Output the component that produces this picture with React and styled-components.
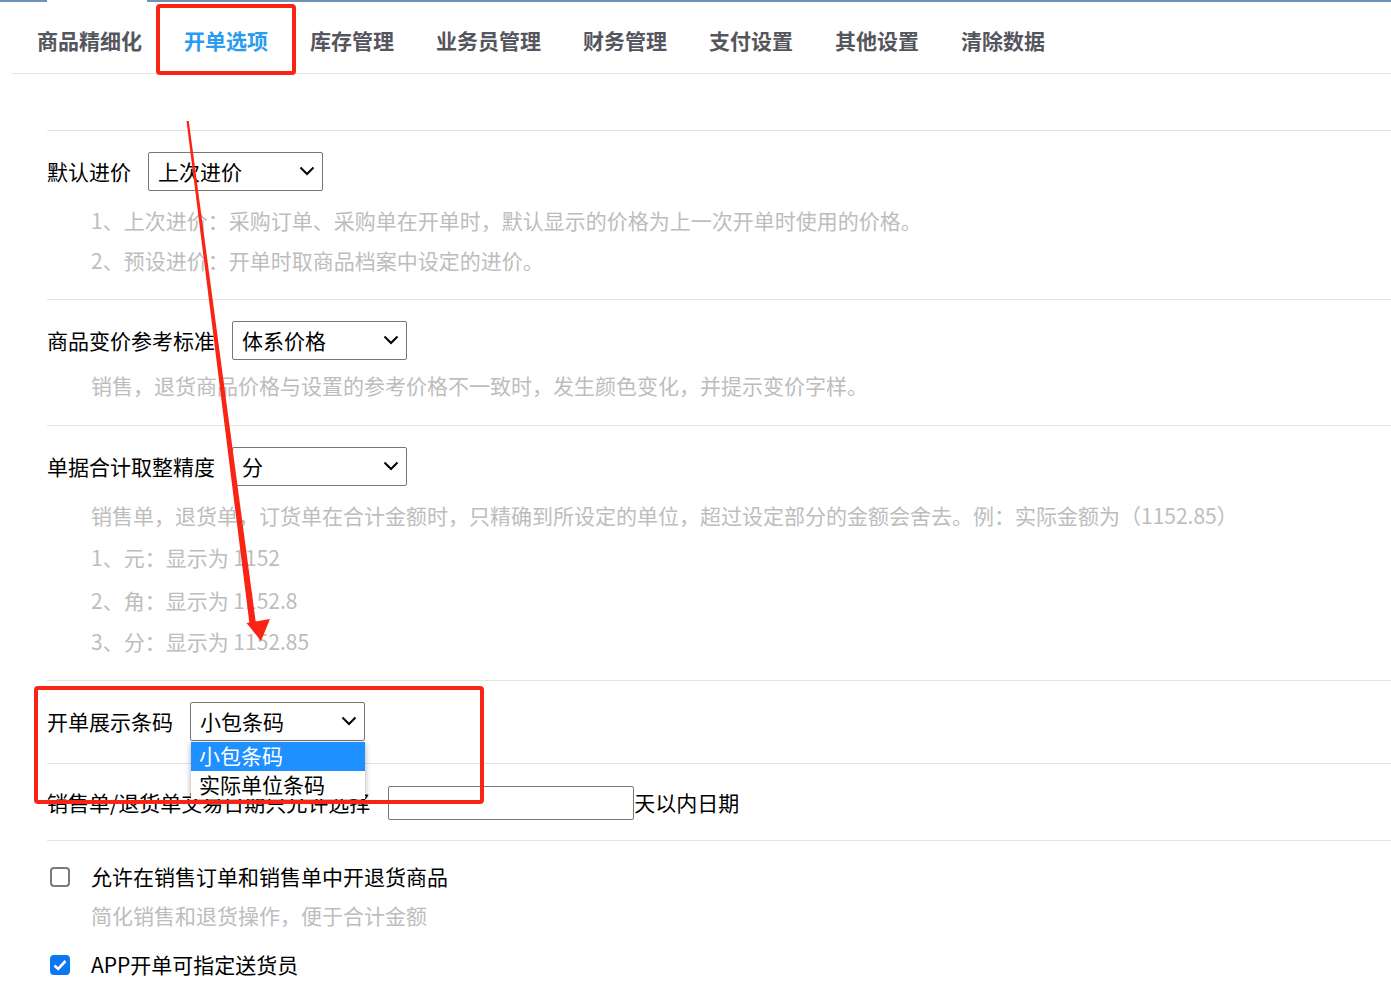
import React from "react";
import styled, { createGlobalStyle } from "styled-components";

const Global = createGlobalStyle`
  html, body { margin: 0; padding: 0; background: #fff; }
  body { font-family: "Noto Sans CJK SC", "Microsoft YaHei", sans-serif; }
  * { box-sizing: border-box; }
`;

const Page = styled.div`
  position: relative;
  width: 1391px;
  height: 992px;
  overflow: hidden;
  background: #fff;
`;

const TopRule = styled.div`
  display: flex;
  gap: 100px;
  height: 2px;
`;

const RuleSeg = styled.div`
  height: 2px;
  background: #6d93b6;
  width: ${(p) => (p.$w ? `${p.$w}px` : "auto")};
  flex: ${(p) => (p.$w ? "none" : "1")};
`;

const TabBar = styled.div`
  display: flex;
  align-items: center;
  margin-left: 12px;
  padding-left: 4px;
  height: 72px;
  border-bottom: 1px solid #e3e3e3;
`;

const Tab = styled.div`
  padding: 0 21px;
  font-size: 21px;
  font-weight: 700;
  line-height: 60px;
  margin-top: 5px;
  color: ${(p) => (p.$active ? "#2a9bf0" : "#55555e")};
  white-space: nowrap;
`;

const Content = styled.div`
  padding-left: 47px;
  margin-top: 56px;
`;

const Section = styled.div`
  border-top: 1px solid #e3e3e3;
  padding-top: ${(p) => p.$pt ?? 21}px;
  padding-bottom: ${(p) => p.$pb ?? 18}px;
`;

const Row = styled.div`
  display: flex;
  align-items: center;
  height: ${(p) => p.$h ?? 39}px;
  font-size: 21px;
  color: #000;
`;

const Label = styled.span`
  margin-right: ${(p) => p.$mr ?? 17}px;
  margin-top: -2px;
  white-space: nowrap;
`;

const SelectWrap = styled.div`
  position: relative;
`;

const SelectBox = styled.div`
  width: 175px;
  height: 39px;
  border: 1px solid #767676;
  border-radius: 2px;
  display: flex;
  align-items: center;
  justify-content: space-between;
  padding: 0 7px 2px 9px;
  font-size: 21px;
  color: #000;
  background: #fff;
`;

const DropList = styled.div`
  position: absolute;
  top: 40px;
  left: 1px;
  width: 174px;
  background: #fff;
  box-shadow: 0 2px 6px rgba(0, 0, 0, 0.35);
  z-index: 5;
`;

const Option = styled.div`
  height: 28.5px;
  line-height: 27px;
  padding-left: 8px;
  font-size: 21px;
  color: ${(p) => (p.$sel ? "#fff" : "#000")};
  background: ${(p) => (p.$sel ? "#1e90ff" : "#fff")};
`;

const Desc = styled.div`
  padding-left: 44px;
  font-size: 21px;
  color: #bdbdbd;
  height: ${(p) => p.$h ?? 40}px;
  line-height: ${(p) => (p.$h ?? 40) - 3}px;
  margin-top: ${(p) => p.$mt ?? 0}px;
  white-space: nowrap;
`;

const TextInput = styled.div`
  width: 246px;
  height: 34px;
  border: 1px solid #767676;
  border-radius: 2px;
  margin-left: 18px;
`;

const CheckRow = styled.div`
  display: flex;
  align-items: center;
  height: 40px;
  font-size: 21px;
  color: #000;
  margin-top: ${(p) => p.$mt ?? 0}px;
`;

const CheckText = styled.span`
  margin-top: -2px;
`;

const Check = styled.span`
  width: 20px;
  height: 20px;
  margin-left: 3px;
  margin-right: 21px;
  border-radius: 4px;
  display: inline-flex;
  align-items: center;
  justify-content: center;
  border: ${(p) => (p.$on ? "none" : "2px solid #7a7a7a")};
  background: ${(p) => (p.$on ? "#0b77f2" : "#fff")};
`;

const Overlay = styled.div`
  position: absolute;
  inset: 0;
  pointer-events: none;
  z-index: 10;
`;

const RedBox = styled.div`
  position: absolute;
  border: 4px solid #fa2414;
  border-radius: 4px;
  left: ${(p) => p.$x}px;
  top: ${(p) => p.$y}px;
  width: ${(p) => p.$w}px;
  height: ${(p) => p.$h}px;
`;

const ArrowSvg = styled.svg`
  position: absolute;
  left: 0;
  top: 0;
`;

const Chevron = () => (
  <svg width="16" height="10" viewBox="0 0 16 10">
    <path d="M1.5 1.5 L8 8 L14.5 1.5" fill="none" stroke="#000" strokeWidth="2" />
  </svg>
);

const Select = ({ value, open }) => (
  <SelectWrap>
    <SelectBox>
      <span>{value}</span>
      <Chevron />
    </SelectBox>
    {open && (
      <DropList>
        <Option $sel>小包条码</Option>
        <Option>实际单位条码</Option>
      </DropList>
    )}
  </SelectWrap>
);

const tabs = ["商品精细化", "开单选项", "库存管理", "业务员管理", "财务管理", "支付设置", "其他设置", "清除数据"];

export default function App() {
  return (
    <Page>
      <Global />
      <TopRule>
        <RuleSeg $w={47} />
        <RuleSeg />
      </TopRule>
      <TabBar>
        {tabs.map((t) => (
          <Tab key={t} $active={t === "开单选项"}>{t}</Tab>
        ))}
      </TabBar>
      <Content>
        <Section $pb={17}>
          <Row>
            <Label>默认进价</Label>
            <Select value="上次进价" />
          </Row>
          <Desc $mt={11}>1、上次进价：采购订单、采购单在开单时，默认显示的价格为上一次开单时使用的价格。</Desc>
          <Desc>2、预设进价：开单时取商品档案中设定的进价。</Desc>
        </Section>
        <Section $pb={18}>
          <Row>
            <Label>商品变价参考标准</Label>
            <Select value="体系价格" />
          </Row>
          <Desc $mt={7}>销售，退货商品价格与设置的参考价格不一致时，发生颜色变化，并提示变价字样。</Desc>
        </Section>
        <Section $pb={18}>
          <Row>
            <Label>单据合计取整精度</Label>
            <Select value="分" />
          </Row>
          <Desc $mt={11}>销售单，退货单，订货单在合计金额时，只精确到所设定的单位，超过设定部分的金额会舍去。例：实际金额为（1152.85）</Desc>
          <Desc $h={43}>1、元：显示为 1152</Desc>
          <Desc $h={43}>2、角：显示为 1152.8</Desc>
          <Desc $h={39}>3、分：显示为 1152.85</Desc>
        </Section>
        <Section $pb={22}>
          <Row>
            <Label $mr={17}>开单展示条码</Label>
            <Select value="小包条码" open />
          </Row>
        </Section>
        <Section $pb={20}>
          <Row $h={35}>
            <Label $mr={0}>销售单/退货单交易日期只允许选择</Label>
            <TextInput />
            <CheckText>天以内日期</CheckText>
          </Row>
        </Section>
        <Section $pt={16} $pb={0}>
          <CheckRow>
            <Check />
            <CheckText>允许在销售订单和销售单中开退货商品</CheckText>
          </CheckRow>
          <Desc>简化销售和退货操作，便于合计金额</Desc>
          <CheckRow $mt={8}>
            <Check $on>
              <svg width="14" height="12" viewBox="0 0 14 12">
                <path d="M1.5 6.5 L5.2 10 L12.5 2" fill="none" stroke="#fff" strokeWidth="2.6" />
              </svg>
            </Check>
            <CheckText>APP开单可指定送货员</CheckText>
          </CheckRow>
        </Section>
      </Content>
      <Overlay>
        <RedBox $x={156} $y={4} $w={140} $h={71} />
        <RedBox $x={34} $y={686} $w={450} $h={118} />
        <ArrowSvg width="1391" height="992" viewBox="0 0 1391 992">
          <polygon points="186.5,121 188.8,121 256,624 249.5,624" fill="#fa2414" />
          <polygon points="246.5,623 270,619 261,641" fill="#fa2414" />
        </ArrowSvg>
      </Overlay>
    </Page>
  );
}
